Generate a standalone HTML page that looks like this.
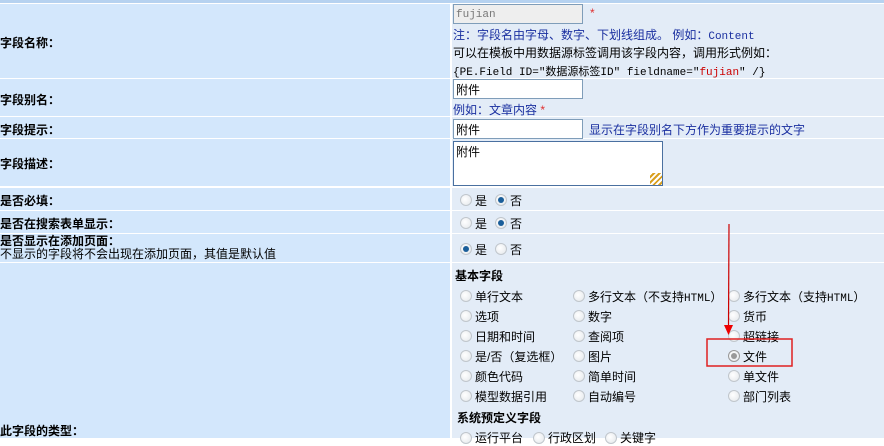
<!DOCTYPE html><html><head><meta charset="utf-8"><style>
*{margin:0;padding:0;box-sizing:border-box}
body{width:884px;height:438px;overflow:hidden;background:#fff;font-family:"Liberation Sans","WenQuanYi Zen Hei","Noto Sans CJK SC",sans-serif;font-size:12px;color:#000;position:relative}
.a{position:absolute;white-space:nowrap}
.l{position:absolute;left:0;width:450px;background:#d3e7fc}
.r{position:absolute;left:452px;width:432px;background:#e3ecf7}
b{font-weight:bold}
.in{position:absolute;background:#fff;border:1px solid #7f9db9;height:20px;padding:3px 2px 0;line-height:15px;font-size:12px}
.rd{position:absolute;width:12px;height:12px;border-radius:50%;border:1px solid #c0c6cc;background:radial-gradient(circle at 40% 40%,#fff,#e2e6ea)}
.rd.on::after{content:"";position:absolute;left:2px;top:2px;width:6px;height:6px;border-radius:50%;background:#1a5e9a}
.rd.g::after{background:#999}
.blue{color:#1a2fa0}
.m{font-family:"Liberation Mono","WenQuanYi Zen Hei",monospace;font-size:11px}
</style></head><body>
<div class="a" style="left:0;top:0;width:884px;height:3px;background:#b6d2f0"></div>
<div class="l" style="top:4px;height:74px"></div><div class="r" style="top:4px;height:74px"></div>
<div class="l" style="top:79px;height:37px"></div><div class="r" style="top:79px;height:37px"></div>
<div class="l" style="top:117px;height:21px"></div><div class="r" style="top:117px;height:21px"></div>
<div class="l" style="top:139px;height:47px"></div><div class="r" style="top:139px;height:47px"></div>
<div class="l" style="top:188px;height:22px"></div><div class="r" style="top:188px;height:22px"></div>
<div class="l" style="top:211px;height:22px"></div><div class="r" style="top:211px;height:22px"></div>
<div class="l" style="top:234px;height:28px"></div><div class="r" style="top:234px;height:28px"></div>
<div class="l" style="top:263px;height:175px"></div><div class="r" style="top:263px;height:175px"></div>

<div class="a" style="left:0;top:34px"><b>字段名称：</b></div>
<div class="a" style="left:0;top:91px"><b>字段别名：</b></div>
<div class="a" style="left:0;top:121px"><b>字段提示：</b></div>
<div class="a" style="left:0;top:155px"><b>字段描述：</b></div>
<div class="a" style="left:0;top:192px"><b>是否必填：</b></div>
<div class="a" style="left:0;top:215px"><b>是否在搜索表单显示：</b></div>
<div class="a" style="left:0;top:235px;line-height:13px"><b>是否显示在添加页面：</b><br>不显示的字段将不会出现在添加页面，其值是默认值</div>
<div class="a" style="left:0;top:422px"><b>此字段的类型：</b></div>

<div class="in m" style="left:453px;top:4px;width:130px;background:#eee;color:#777">fujian</div>
<div class="a" style="left:590px;top:6px;color:#e03030">*</div>
<div class="a blue" style="left:453px;top:26px">注：字段名由字母、数字、下划线组成。 例如：<span class="m">Content</span></div>
<div class="a" style="left:453px;top:44px">可以在模板中用数据源标签调用该字段内容，调用形式例如：</div>
<div class="a m" style="left:453px;top:63px">{PE.Field ID="数据源标签ID" fieldname="<span style="color:#c00">fujian</span>" /}</div>
<div class="in" style="left:453px;top:79px;width:130px">附件</div>
<div class="a blue" style="left:453px;top:101px">例如：文章内容 <span style="color:#e03030">*</span></div>
<div class="in" style="left:453px;top:119px;width:130px">附件</div>
<div class="a blue" style="left:589px;top:121px">显示在字段别名下方作为重要提示的文字</div>
<div class="in" style="left:453px;top:141px;width:210px;height:45px;border-color:#4a70a0">附件</div>
<div class="a" style="left:650px;top:173px;width:12px;height:12px;background:repeating-linear-gradient(135deg,#fff 0 2px,#d9a020 2px 4px)"></div>

<div class="rd" style="left:460px;top:194px"></div><div class="a" style="left:475px;top:192px">是</div>
<div class="rd on" style="left:495px;top:194px"></div><div class="a" style="left:510px;top:192px">否</div>
<div class="rd" style="left:460px;top:217px"></div><div class="a" style="left:475px;top:215px">是</div>
<div class="rd on" style="left:495px;top:217px"></div><div class="a" style="left:510px;top:215px">否</div>
<div class="rd on" style="left:460px;top:243px"></div><div class="a" style="left:475px;top:241px">是</div>
<div class="rd" style="left:495px;top:243px"></div><div class="a" style="left:510px;top:241px">否</div>

<div class="a" style="left:455px;top:267px"><b>基本字段</b></div>
<div class="rd" style="left:460px;top:290px"></div><div class="a" style="left:475px;top:288px">单行文本</div>
<div class="rd" style="left:573px;top:290px"></div><div class="a" style="left:588px;top:288px">多行文本（不支持<span class="m">HTML</span>）</div>
<div class="rd" style="left:728px;top:290px"></div><div class="a" style="left:743px;top:288px">多行文本（支持<span class="m">HTML</span>）</div>
<div class="rd" style="left:460px;top:310px"></div><div class="a" style="left:475px;top:308px">选项</div>
<div class="rd" style="left:573px;top:310px"></div><div class="a" style="left:588px;top:308px">数字</div>
<div class="rd" style="left:728px;top:310px"></div><div class="a" style="left:743px;top:308px">货币</div>
<div class="rd" style="left:460px;top:330px"></div><div class="a" style="left:475px;top:328px">日期和时间</div>
<div class="rd" style="left:573px;top:330px"></div><div class="a" style="left:588px;top:328px">查阅项</div>
<div class="rd" style="left:728px;top:330px"></div><div class="a" style="left:743px;top:328px">超链接</div>
<div class="rd" style="left:460px;top:350px"></div><div class="a" style="left:475px;top:348px">是/否（复选框）</div>
<div class="rd" style="left:573px;top:350px"></div><div class="a" style="left:588px;top:348px">图片</div>
<div class="rd on g" style="left:728px;top:350px;border-color:#999"></div><div class="a" style="left:743px;top:348px">文件</div>
<div class="rd" style="left:460px;top:370px"></div><div class="a" style="left:475px;top:368px">颜色代码</div>
<div class="rd" style="left:573px;top:370px"></div><div class="a" style="left:588px;top:368px">简单时间</div>
<div class="rd" style="left:728px;top:370px"></div><div class="a" style="left:743px;top:368px">单文件</div>
<div class="rd" style="left:460px;top:390px"></div><div class="a" style="left:475px;top:388px">模型数据引用</div>
<div class="rd" style="left:573px;top:390px"></div><div class="a" style="left:588px;top:388px">自动编号</div>
<div class="rd" style="left:728px;top:390px"></div><div class="a" style="left:743px;top:388px">部门列表</div>
<div class="a" style="left:457px;top:409px"><b>系统预定义字段</b></div>
<div class="rd" style="left:460px;top:432px"></div><div class="a" style="left:475px;top:429px">运行平台</div>
<div class="rd" style="left:533px;top:432px"></div><div class="a" style="left:548px;top:429px">行政区划</div>
<div class="rd" style="left:605px;top:432px"></div><div class="a" style="left:620px;top:429px">关键字</div>

<svg class="a" style="left:0;top:0" width="884" height="438">
<line x1="729" y1="224" x2="728.5" y2="326" stroke="#c00" stroke-width="1.2"/>
<polygon points="724,325 733,325 728.5,335" fill="#e00"/>
<rect x="707" y="339" width="85" height="27" fill="none" stroke="#e02020" stroke-width="1.5"/>
</svg>
</body></html>
